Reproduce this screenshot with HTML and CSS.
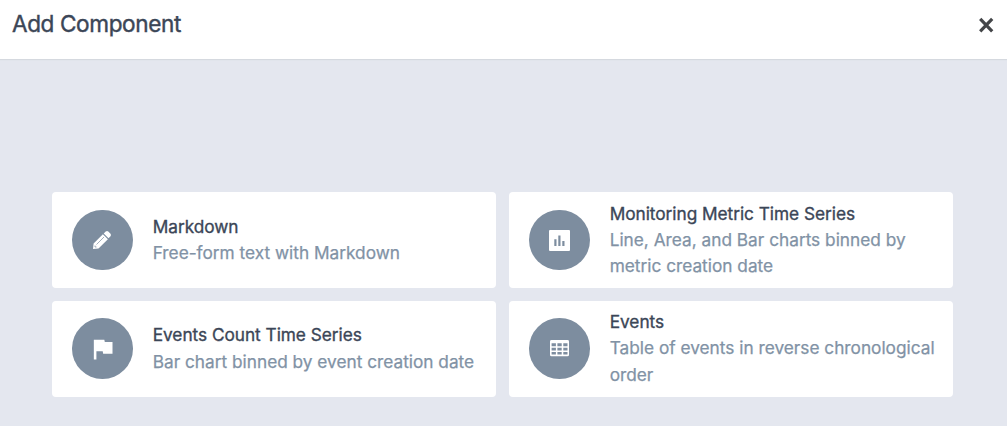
FILE: index.html
```html
<!DOCTYPE html>
<html lang="en">
<head>
<meta charset="utf-8">
<title>Add Component</title>
<link rel="stylesheet" href="styles.css">
</head>
<body>
<header class="header">
  <h1 class="title">Add Component</h1>
  <button class="close" aria-label="Close"><svg width="16" height="16" viewBox="0 0 16 16"><path d="M2.200 1.900l12 12.400M14.200 1.900L2.200 14.300" stroke="#444649" stroke-width="3.200"/></svg></button>
</header>
<main class="grid">
  <section class="card">
    <div class="icon"><svg width="20" height="20" viewBox="0 0 20 20"><path d="M1 19l.6-5.600L10.900 4.200l5 5-9.400 9.200zM11.700 3.500l2-2q1.400-1 2.600 0l2.200 2.200q1 1.200 0 2.600l-2 2z"/><path class="detail" d="M4.500 14.500l7.500-7.500M3 15.500v1.500h1.500" /></svg></div>
    <div class="text"><h2>Markdown</h2><p>Free-form text with Markdown</p></div>
  </section>
  <section class="card">
    <div class="icon"><svg width="21" height="21" viewBox="0 0 21 21"><path fill-rule="evenodd" d="M1 0h19q1 0 1 1v19q0 1-1 1H1q-1 0-1-1V1q0-1 1-1zM5.300 9.300V16h2.200V9.300zM9.300 5.500V16h2.200V5.500zM13.300 11v5h2.200v-5z"/></svg></div>
    <div class="text"><h2>Monitoring Metric Time Series</h2><p>Line, Area, and Bar charts binned by metric creation date</p></div>
  </section>
  <section class="card">
    <div class="icon"><svg width="28" height="28" viewBox="0 0 24 24"><path d="M14.400 6L14 4H5v17h2.200v-7h5.400l.4 2h8V6z"/></svg></div>
    <div class="text"><h2>Events Count Time Series</h2><p>Bar chart binned by event creation date</p></div>
  </section>
  <section class="card">
    <div class="icon"><svg width="19" height="16.300" viewBox="0 0 19 16.300"><path fill-rule="evenodd" d="M1.500 0h16Q19 0 19 1.500v13.300q0 1.500-1.500 1.500h-16Q0 16.300 0 14.800V1.500Q0 0 1.500 0zM1.600 3.300v2.900h4.300V3.300zM7.400 3.300v2.900h4.300V3.300zM13.300 3.300v2.900h4.200V3.300zM1.600 7.800v2.700h4.300V7.800zM7.400 7.800v2.700h4.300V7.800zM13.300 7.800v2.700h4.200V7.800zM1.600 12.100v2.500h4.300v-2.500zM7.400 12.100v2.500h4.300v-2.500zM13.300 12.100v2.500h4.200v-2.500z"/></svg></div>
    <div class="text"><h2>Events</h2><p>Table of events in reverse chronological order</p></div>
  </section>
</main>
</body>
</html>
```
FILE: styles.css
```css
* { box-sizing: border-box; }
body { margin: 0; height: 426px; background: #e4e7ef; font-family: Inter, sans-serif; overflow: hidden; }
.header { height: 59px; padding: 0 13px 12px 12px; display: flex; align-items: center; justify-content: space-between; background: #fff; box-shadow: 0 1px 1px #d5d9df; }
.title { margin: 0; font-size: 22.600px; font-weight: 400; letter-spacing: -.4px; color: #3b4657; -webkit-text-stroke: .4px #3b4657; }
.close { padding: 3px 0 0; border: 0; background: none; display: flex; }
.grid { padding: 133px 54px 0 52px; display: grid; grid-template-columns: 444px 444px; grid-auto-rows: 96px; gap: 12.600px 13px; }
.card { display: flex; align-items: center; padding: 0 19px 0 20px; gap: 20px; background: #fff; border-radius: 4px; }
.icon { flex: none; width: 60.700px; height: 60.700px; border-radius: 50%; background: #7d8d9f; display: flex; align-items: center; justify-content: center; }
.icon svg { fill: #fff; }
.icon .detail { fill: none; stroke: #7d8d9f; stroke-width: .7; }
.text { margin-right: -6px; font-size: 17.250px; line-height: 26.200px; }
.text h2, .text p { margin: 0; font-size: inherit; font-weight: 400; }
.text h2 { color: #3b4657; letter-spacing: -.03px; -webkit-text-stroke: .35px #3b4657; }
.text p { color: #8192a5; -webkit-text-stroke: .25px #8192a5; }
```
